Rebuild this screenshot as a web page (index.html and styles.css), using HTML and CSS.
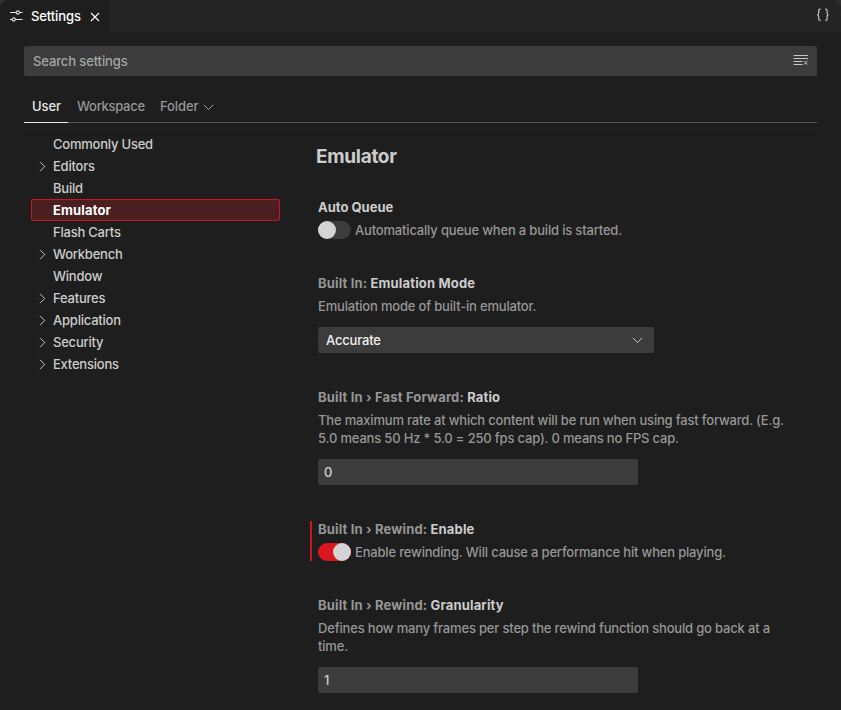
FILE: index.html
```html
<!DOCTYPE html>
<html lang="en">
<head>
<meta charset="utf-8">
<title>Settings</title>
<link rel="stylesheet" href="styles.css">
</head>
<body>
<div class="window">
  <header class="titlebar">
    <div class="tab">
      <svg class="tab-icon" width="14" height="12" viewBox="0 0 14 12"><path d="M1 2.5h6M10.5 2.5h3M1 9.5h2M6.2 9.5h7.3"/><circle cx="8.8" cy="2.5" r="1.6"/><circle cx="4.8" cy="9.5" r="1.6"/></svg>
      <span class="tab-name">Settings</span>
      <svg class="tab-close" width="10" height="10" viewBox="0 0 10 10"><path d="M1 1l8 8M9 1L1 9"/></svg>
    </div>
    <svg class="json" width="14" height="14" viewBox="0 0 14 14"><path d="M4.6 1.2H4Q2.7 1.2 2.7 2.6V5Q2.7 6.8 1.2 6.8Q2.7 6.8 2.7 8.6V11Q2.7 12.4 4 12.4H4.6M9.2 1.2H9.8Q11.1 1.2 11.1 2.6V5Q11.1 6.8 12.6 6.8Q11.1 6.8 11.1 8.6V11Q11.1 12.4 9.8 12.4H9.2"/></svg>
  </header>
  <div class="search">
    <span>Search settings</span>
    <svg width="16" height="12" viewBox="0 0 16 12"><path d="M0.5 1.5h14.5M0.5 4.5h14.5M0.5 7.5h9M0.5 10.5h9M10.9 7l3.6 3.6M14.5 7l-3.6 3.6"/></svg>
  </div>
  <nav class="scopes">
    <div class="scope active"><span>User</span></div>
    <div class="scope workspace"><span>Workspace</span></div>
    <div class="scope"><span>Folder</span><svg class="chev" width="11" height="7" viewBox="0 0 11 7"><path d="M0.8 0.8L5.5 5.5L10.2 0.8"/></svg></div>
  </nav>
  <div class="shade"></div>
  <main class="body">
    <ul class="tree">
      <li><i></i><span>Commonly Used</span></li>
      <li><i><svg width="7" height="11" viewBox="0 0 7 11"><path d="M1 0.8L5.7 5.5L1 10.2"/></svg></i><span>Editors</span></li>
      <li><i></i><span>Build</span></li>
      <li class="selected"><i></i><span>Emulator</span></li>
      <li><i></i><span>Flash Carts</span></li>
      <li><i><svg width="7" height="11" viewBox="0 0 7 11"><path d="M1 0.8L5.7 5.5L1 10.2"/></svg></i><span>Workbench</span></li>
      <li><i></i><span>Window</span></li>
      <li><i><svg width="7" height="11" viewBox="0 0 7 11"><path d="M1 0.8L5.7 5.5L1 10.2"/></svg></i><span>Features</span></li>
      <li><i><svg width="7" height="11" viewBox="0 0 7 11"><path d="M1 0.8L5.7 5.5L1 10.2"/></svg></i><span>Application</span></li>
      <li><i><svg width="7" height="11" viewBox="0 0 7 11"><path d="M1 0.8L5.7 5.5L1 10.2"/></svg></i><span>Security</span></li>
      <li><i><svg width="7" height="11" viewBox="0 0 7 11"><path d="M1 0.8L5.7 5.5L1 10.2"/></svg></i><span>Extensions</span></li>
    </ul>
    <section class="settings">
      <h1>Emulator</h1>
      <article>
        <h2 class="plain">Auto Queue</h2>
        <div class="check"><span class="toggle"></span><p>Automatically queue when a build is started.</p></div>
      </article>
      <article>
        <h2><span>Built In:</span> Emulation Mode</h2>
        <p class="desc">Emulation mode of built-in emulator.</p>
        <div class="field select">Accurate<svg class="chev" width="11" height="7" viewBox="0 0 11 7"><path d="M0.8 0.8L5.5 5.5L10.2 0.8"/></svg></div>
      </article>
      <article>
        <h2><span>Built In › Fast Forward:</span> Ratio</h2>
        <p class="desc">The maximum rate at which content will be run when using fast forward. (E.g.<br>5.0 means 50 Hz * 5.0 = 250 fps cap). 0 means no FPS cap.</p>
        <div class="field">0</div>
      </article>
      <article class="modified">
        <h2><span>Built In › Rewind:</span> Enable</h2>
        <div class="check"><span class="toggle on"></span><p>Enable rewinding. Will cause a performance hit when playing.</p></div>
      </article>
      <article>
        <h2><span>Built In › Rewind:</span> Granularity</h2>
        <p class="desc">Defines how many frames per step the rewind function should go back at a<br>time.</p>
        <div class="field">1</div>
      </article>
    </section>
  </main>
</div>
</body>
</html>
```
FILE: styles.css
```css
* { box-sizing: border-box; }
body { margin: 0; background: #303030; font-family: Inter, "Liberation Sans", sans-serif; font-size: 13px; font-weight: 450; line-height: 18px; letter-spacing: -0.18px; color: #ccc; }
h1, h2, p, ul { margin: 0; padding: 0; }
svg { fill: none; stroke: #c5c5c5; stroke-width: 1; flex: none; display: block; }
.window { height: 710px; background: #1e1e1e; border-radius: 9px 9px 0 0; overflow: hidden; }
.titlebar { height: 32px; background: #252526; display: flex; justify-content: space-between; }
.tab { width: 109px; background: #1e1e1e; display: flex; align-items: center; padding-left: 9px; color: #fff; }
.tab-icon { margin-right: 8px; stroke: #e4e4e4; stroke-width: 1.1; }
.tab-name { width: 59px; letter-spacing: -0.1px; }
.tab-close { stroke: #fff; stroke-width: 1.1; margin-top: 1px; }
.json { margin: 8px 11px 0 0; stroke-width: 1.2; }
.search { height: 30px; margin: 14px 24px 0; padding: 0 8px 0 9px; background: #3c3c3c; border-radius: 2px; display: flex; align-items: center; justify-content: space-between; color: #a6a6a6; }
.search svg { margin-bottom: 2px; }
.search, .scope { letter-spacing: -0.12px; }
.scopes { height: 32px; margin: 15px 24px 0; border-bottom: 1px solid #585858; display: flex; color: #969696; }
.scope { display: flex; align-items: center; padding: 0 8px; height: 30px; }
.scope.active { color: #e7e7e7; border-bottom: 1px solid #e7e7e7; padding-bottom: 1px; width: 44px; height: 32px; }
.scope.workspace { width: 83px; margin-left: 1px; letter-spacing: -0.3px; }
.scope .chev { margin: 3px 0 0 5px; }
.chev { stroke: #a0a0a0; }
.select .chev { stroke: #c5c5c5; margin-right: 1px; }
.shade { height: 4px; margin: 10px 24px -4px; background: linear-gradient(#191919, #1e1e1e); }
.body { display: flex; padding-left: 31px; }
.tree { width: 249px; list-style: none; letter-spacing: -0.22px; }
.tree li { height: 22px; display: flex; align-items: center; border: 1px solid transparent; border-radius: 2px; }
.tree i { width: 21px; padding-left: 7px; flex: none; }
.tree .selected { background: #4b1f1f; border-color: #c9161f; color: #fff; font-weight: 700; letter-spacing: 0.15px; }
.settings { margin-left: 38px; }
h1 { font-size: 19px; line-height: 24px; font-weight: 700; margin: 12px 0 30px -2px; letter-spacing: -0.3px; }
article { margin-bottom: 36px; }
h2 { font-size: 13px; height: 18px; line-height: 16px; font-weight: 700; letter-spacing: 0.16px; }
h2.plain { letter-spacing: 0; }
h2 span { color: #969696; }
.desc { margin: 4px 0 12px; color: #969696; }
.check { display: flex; gap: 4px; margin-top: 4px; height: 18px; color: #969696; }
.toggle { width: 33px; height: 18px; border-radius: 9px; background: #3c3c3c; display: flex; }
.toggle::before { content: ""; width: 18px; height: 18px; border-radius: 50%; background: #d4d4d4; }
.toggle.on { background: #d81720; justify-content: flex-end; }
.modified { border-left: 2px solid #c9161f; margin-left: -8px; padding-left: 6px; height: 40px; }
.field { width: 320px; height: 26px; background: #3c3c3c; border-radius: 2px; padding: 0 6px; display: flex; align-items: center; }
.select { width: 336px; padding: 0 10px 0 8px; color: #f0f0f0; justify-content: space-between; }
```
